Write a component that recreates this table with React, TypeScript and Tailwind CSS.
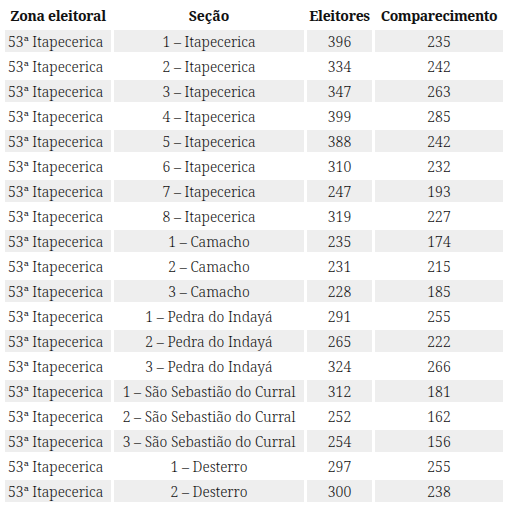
import React from "react";

const rows: [string, number, number][] = [
  ["1 – Itapecerica", 396, 235],
  ["2 – Itapecerica", 334, 242],
  ["3 – Itapecerica", 347, 263],
  ["4 – Itapecerica", 399, 285],
  ["5 – Itapecerica", 388, 242],
  ["6 – Itapecerica", 310, 232],
  ["7 – Itapecerica", 247, 193],
  ["8 – Itapecerica", 319, 227],
  ["1 – Camacho", 235, 174],
  ["2 – Camacho", 231, 215],
  ["3 – Camacho", 228, 185],
  ["1 – Pedra do Indayá", 291, 255],
  ["2 – Pedra do Indayá", 265, 222],
  ["3 – Pedra do Indayá", 324, 266],
  ["1 – São Sebastião do Curral", 312, 181],
  ["2 – São Sebastião do Curral", 252, 162],
  ["3 – São Sebastião do Curral", 254, 156],
  ["1 – Desterro", 297, 255],
  ["2 – Desterro", 300, 238],
];

export default function App() {
  return (
    <div className="w-[509px] h-[508px] bg-white pt-[2px] pl-[2px] font-['Noto_Serif'] text-[14px] leading-[22px] text-[#111]">
      <table className="border-separate border-spacing-[3px] table-fixed">
        <colgroup>
          <col className="w-[106px]" />
          <col className="w-[190px]" />
          <col className="w-[65px]" />
          <col className="w-[128px]" />
        </colgroup>
        <thead>
          <tr className="h-[22px]">
            <th className="font-bold p-0 text-center whitespace-nowrap tracking-[-0.3px]">Zona eleitoral</th>
            <th className="font-bold p-0 text-center">Seção</th>
            <th className="font-bold p-0 text-center tracking-[-0.3px]">Eleitores</th>
            <th className="font-bold p-0 text-center whitespace-nowrap tracking-[-0.4px]">Comparecimento</th>
          </tr>
        </thead>
        <tbody className="font-light leading-[21px]">
          {rows.map((r, i) => (
            <tr key={i} className="h-[22px]">
              <td className={`p-0 pl-[3px] pt-[1px] text-left whitespace-nowrap ${i % 2 === 0 ? "bg-[#eeeeee]" : ""}`}>53ª Itapecerica</td>
              <td className={`p-0 pt-[1px] text-center whitespace-nowrap ${i % 2 === 0 ? "bg-[#eeeeee]" : ""}`}>{r[0]}</td>
              <td className={`p-0 pt-[1px] text-center ${i % 2 === 0 ? "bg-[#eeeeee]" : ""}`}>{r[1]}</td>
              <td className={`p-0 pt-[1px] text-center ${i % 2 === 0 ? "bg-[#eeeeee]" : ""}`}>{r[2]}</td>
            </tr>
          ))}
        </tbody>
      </table>
    </div>
  );
}
